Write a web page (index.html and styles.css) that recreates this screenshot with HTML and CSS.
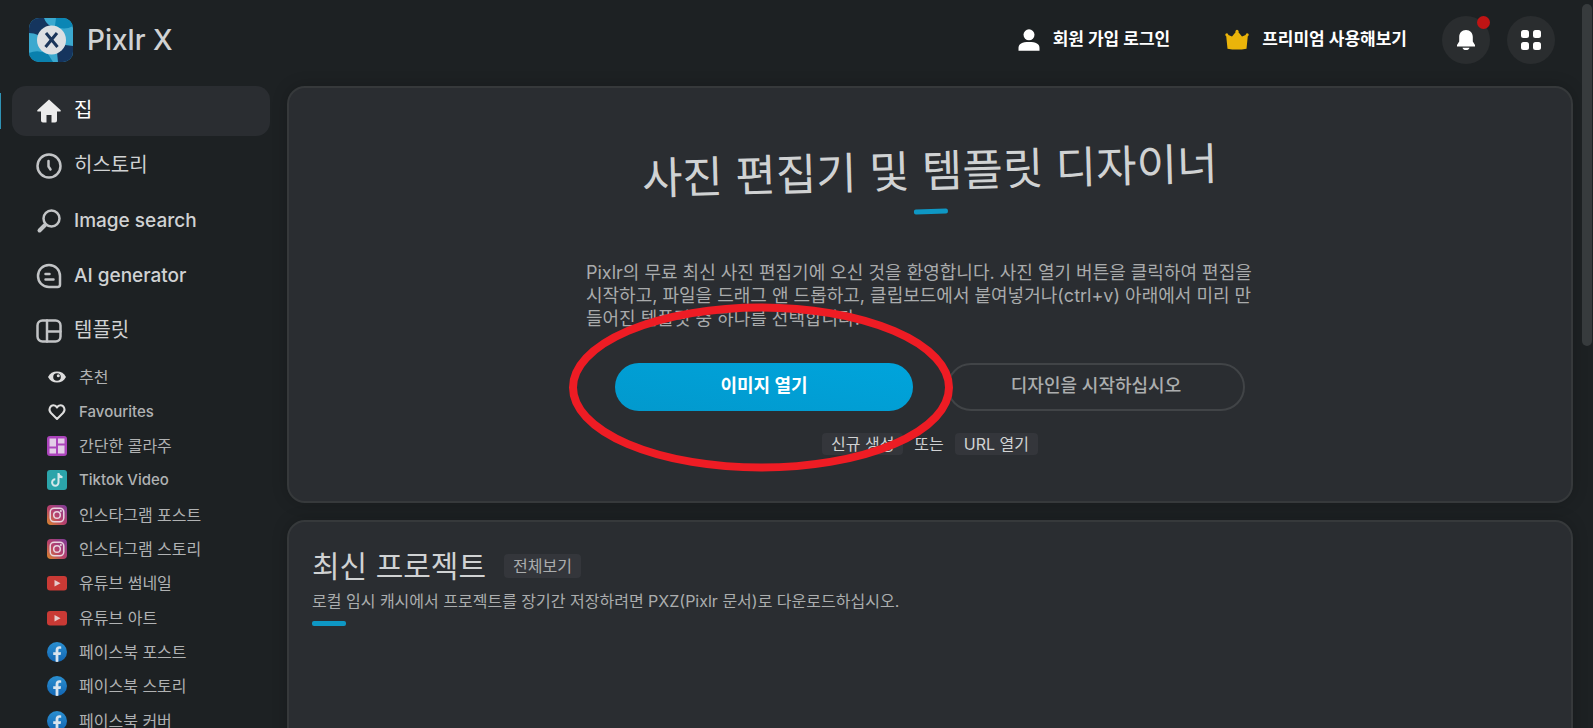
FILE: index.html
```html
<!DOCTYPE html>
<html lang="ko">
<head>
    <meta charset="UTF-8">
    <title>Pixlr X</title>
    <link rel="stylesheet" href="styles.css">
</head>
<body>
<!-- shared icons -->
<svg class="defs" width="0" height="0">
    <defs>
        <linearGradient id="insta" x1="0" y1="1" x2="1" y2="0">
            <stop offset="0" stop-color="#d98a2b"/>
            <stop offset="0.45" stop-color="#b8416a"/>
            <stop offset="1" stop-color="#7d3d9a"/>
        </linearGradient>
        <linearGradient id="fb" x1="0" y1="0" x2="0" y2="1">
            <stop offset="0" stop-color="#2a8fd0"/>
            <stop offset="1" stop-color="#1266b4"/>
        </linearGradient>
        <clipPath id="logoClip"><rect width="44" height="44" rx="10"/></clipPath>
        <clipPath id="fbClip"><circle cx="10" cy="10" r="10"/></clipPath>
    </defs>
    <symbol id="icon-insta" viewBox="0 0 20 20">
        <rect width="20" height="20" rx="4" fill="url(#insta)"/>
        <rect x="3.2" y="3.2" width="13.6" height="13.6" rx="4" fill="none" stroke="#e8d5df" stroke-width="1.5"/>
        <circle cx="10" cy="10" r="3.3" fill="none" stroke="#e8d5df" stroke-width="1.5"/>
        <circle cx="13.9" cy="6.1" r="1" fill="#e8d5df"/>
    </symbol>
    <symbol id="icon-youtube" viewBox="0 0 20 20">
        <rect y="3" width="20" height="14.5" rx="3" fill="#c93a35"/>
        <path d="M7.5 7v6.6l6-3.3z" fill="#e6cccc"/>
    </symbol>
    <symbol id="icon-facebook" viewBox="0 0 20 20">
        <circle cx="10" cy="10" r="10" fill="url(#fb)"/>
        <path clip-path="url(#fbClip)" d="M8.6 20v-7H6.2v-2.8h2.4V8.1c0-2.5 1.5-3.9 3.7-3.9.8 0 1.7.1 1.9.2v2.4h-1.3c-1.2 0-1.5.6-1.5 1.4v2h2.7l-.5 2.8h-2.2v7z" fill="#d9e4ee"/>
    </symbol>
</svg>

<div class="page">
    <div class="content">
        <header class="header">
            <a class="brand" href="#">
                <svg width="44" height="44" viewBox="0 0 44 44">
                    <g clip-path="url(#logoClip)">
                        <rect width="44" height="44" fill="#3ba9cf"/>
                        <path d="M0 0H15Q17 6 23 9L9 17Q5 15 0 15z" fill="#15355e"/>
                        <path d="M27 0H44V8Q35 13 26 8z" fill="#0a86b5"/>
                        <path d="M44 28V44H29L28 34 36 27z" fill="#15355e"/>
                        <path d="M0 35Q9 31 19 36L24 44H0z" fill="#0a80ad"/>
                    </g>
                    <circle cx="22.500" cy="22" r="14.500" fill="#dcdfe2"/>
                    <path d="M17 15l11.500 14M28 15L16.500 29" fill="none" stroke="#1a355a" stroke-width="3"/>
                </svg>
                <span class="brand-name">Pixlr X</span>
            </a>
            <nav class="top-nav">
                <a class="top-link" href="#">
                    <svg width="22" height="22" viewBox="0 0 22 22" fill="#fff">
                        <circle cx="11" cy="5.800" r="5.500"/>
                        <path d="M.5 21.800v-3C.5 15 4 13 11 13s10.500 2 10.500 5.800v3z"/>
                    </svg>
                    <span>회원 가입 로그인</span>
                </a>
                <a class="top-link" href="#">
                    <svg width="24" height="22" viewBox="0 0 24 22" fill="#eab40a">
                        <path d="M1 5l6 2.500L12 1.500l5 6L23 5l-1.500 14.700Q12 21.500 2.500 19.700z"/>
                        <circle cx="1.800" cy="5.700" r="1.500"/><circle cx="12" cy="2.200" r="1.500"/><circle cx="22.200" cy="5.700" r="1.500"/>
                    </svg>
                    <span>프리미엄 사용해보기</span>
                </a>
                <div class="round-buttons">
                    <button class="round" type="button" aria-label="알림">
                        <svg width="20" height="22" viewBox="0 0 20 22" fill="#fff">
                            <path d="M10 1C5.800 1 3.200 4 3.200 8v4.500L1 16v1.500h18V16l-2.200-3.500V8c0-4-2.600-7-6.800-7zM6.500 18.700h7c-.4 1.600-1.600 2.300-3.500 2.300s-3.100-.7-3.500-2.300z"/>
                        </svg>
                        <span class="dot"></span>
                    </button>
                    <button class="round" type="button" aria-label="메뉴">
                        <svg width="20" height="22" viewBox="0 0 20 22" fill="#fff">
                            <rect y="1" width="8" height="8" rx="2.500"/><rect x="12" y="1" width="8" height="8" rx="2.500"/>
                            <rect y="13" width="8" height="8" rx="2.500"/><rect x="12" y="13" width="8" height="8" rx="2.500"/>
                        </svg>
                    </button>
                </div>
            </nav>
        </header>

        <div class="columns">
            <aside class="sidebar">
                <ul class="menu">
                    <li class="menu-item active">
                        <a href="#">
                            <svg width="26" height="26" viewBox="0 0 26 26" fill="#ececec">
                                <path d="M13 1.500L24.500 12Q25.500 13.500 23.500 13.500H21V22.500Q21 24.500 19 24.500H15.500V17H10.500V24.500H7Q5 24.500 5 22.500V13.500H2.500Q.5 13.500 1.500 12z"/>
                            </svg>
                            <span>집</span>
                        </a>
                    </li>
                    <li class="menu-item">
                        <a href="#">
                            <svg class="line" width="26" height="26" viewBox="0 0 26 26">
                                <circle cx="13" cy="13" r="11.500"/>
                                <path d="M12.500 8v5.500l2 3"/>
                            </svg>
                            <span>히스토리</span>
                        </a>
                    </li>
                    <li class="menu-item">
                        <a href="#">
                            <svg class="line" width="26" height="26" viewBox="0 0 26 26">
                                <circle cx="15.500" cy="10.500" r="8"/>
                                <path d="M9 17l-5.500 5.500" stroke-width="4"/>
                            </svg>
                            <span class="latin">Image search</span>
                        </a>
                    </li>
                    <li class="menu-item">
                        <a href="#">
                            <svg class="line" width="26" height="26" viewBox="0 0 26 26">
                                <path d="M13 2C6.500 2 2 7 2 13s4.500 11 11 11h8.500Q24 24 24 21.500V13C24 7 19.500 2 13 2z"/>
                                <path d="M9.500 11h4M9.500 16.500h8"/>
                            </svg>
                            <span class="latin">AI generator</span>
                        </a>
                    </li>
                    <li class="menu-item">
                        <a href="#">
                            <svg class="line" width="26" height="26" viewBox="0 0 26 26">
                                <rect x="1.500" y="2.500" width="23" height="21" rx="5"/>
                                <path d="M11 2.500v21M11 13.500h13.500"/>
                            </svg>
                            <span>템플릿</span>
                        </a>
                    </li>
                </ul>
                <ul class="submenu">
                    <li><a href="#">
                        <svg width="20" height="20" viewBox="0 0 20 20">
                            <path d="M1 10C3 6.300 6 4.500 10 4.500S17 6.300 19 10C17 13.700 14 15.500 10 15.500S3 13.700 1 10z" fill="#dedede"/>
                            <circle cx="10" cy="10" r="3.800" fill="#1d2123"/>
                            <circle cx="11.300" cy="8.800" r="1.500" fill="#dedede"/>
                        </svg>
                        추천</a></li>
                    <li><a class="latin-small" href="#">
                        <svg width="20" height="20" viewBox="0 0 20 20">
                            <path d="M10 17L4 11C.6 7.500 3.500 3.200 6.500 3.200c1.600 0 2.800.8 3.500 2.300.7-1.500 1.900-2.300 3.500-2.300 3 0 5.900 4.300 2.500 7.800z" fill="none" stroke="#dedede" stroke-width="2" stroke-linejoin="round"/>
                        </svg>
                        Favourites</a></li>
                    <li><a href="#">
                        <svg width="20" height="20" viewBox="0 0 20 20">
                            <rect width="20" height="20" rx="3" fill="#ab44bb"/>
                            <path d="M2.500 2.500h6.500v8H2.500zM11 2.500h6.500v5H11zM2.500 12.500h6.500v5H2.500zM11 9.500h6.500v8H11z" fill="#e3cde7"/>
                        </svg>
                        간단한 콜라주</a></li>
                    <li><a class="latin-small" href="#">
                        <svg width="20" height="20" viewBox="0 0 20 20">
                            <rect width="20" height="20" rx="3" fill="#2ba4aa"/>
                            <path d="M11.500 3v9.500a3.200 3.200 0 1 1-3.200-3.200M11.500 3.500c.3 2.300 1.700 3.500 4 3.700" fill="none" stroke="#d5e8ea" stroke-width="2"/>
                        </svg>
                        Tiktok Video</a></li>
                    <li><a href="#"><svg width="20" height="20"><use href="#icon-insta"/></svg>인스타그램 포스트</a></li>
                    <li><a href="#"><svg width="20" height="20"><use href="#icon-insta"/></svg>인스타그램 스토리</a></li>
                    <li><a href="#"><svg width="20" height="20"><use href="#icon-youtube"/></svg>유튜브 썸네일</a></li>
                    <li><a href="#"><svg width="20" height="20"><use href="#icon-youtube"/></svg>유튜브 아트</a></li>
                    <li><a href="#"><svg width="20" height="20"><use href="#icon-facebook"/></svg>페이스북 포스트</a></li>
                    <li><a href="#"><svg width="20" height="20"><use href="#icon-facebook"/></svg>페이스북 스토리</a></li>
                    <li><a href="#"><svg width="20" height="20"><use href="#icon-facebook"/></svg>페이스북 커버</a></li>
                </ul>
            </aside>

            <main class="main">
                <section class="card hero">
                    <h1 class="hero-title">사진 편집기 및 템플릿 디자이너</h1>
                    <p class="hero-text">Pixlr의 무료 최신 사진 편집기에 오신 것을 환영합니다. 사진 열기 버튼을 클릭하여 편집을 시작하고, 파일을 드래그 앤 드롭하고, 클립보드에서 붙여넣거나(ctrl+v) 아래에서 미리 만들어진 템플릿 중 하나를 선택합니다.</p>
                    <div class="actions">
                        <button class="btn primary" type="button">이미지 열기</button>
                        <button class="btn outline" type="button">디자인을 시작하십시오</button>
                        <svg class="highlight" width="384" height="169" viewBox="0 0 384 169">
                            <ellipse cx="192" cy="84.500" rx="188" ry="80" fill="none" stroke="#ee1c24" stroke-width="8"/>
                        </svg>
                    </div>
                    <div class="alt">
                        <button class="chip" type="button">신규 생성</button>
                        <span>또는</span>
                        <button class="chip" type="button">URL 열기</button>
                    </div>
                </section>

                <section class="card projects">
                    <div class="projects-head">
                        <h2>최신 프로젝트</h2>
                        <button class="chip view-all" type="button">전체보기</button>
                    </div>
                    <p>로컬 임시 캐시에서 프로젝트를 장기간 저장하려면 PXZ(Pixlr 문서)로 다운로드하십시오.</p>
                </section>
            </main>
        </div>
    </div>
    <div class="scrollbar"><div class="thumb"></div></div>
</div>
</body>
</html>
```

FILE: styles.css
```css
* {
    box-sizing: border-box;
    margin: 0;
    padding: 0;
}

body {
    background: #1d2123;
    color: #d0d2d3;
    font-family: Inter, "Noto Sans CJK KR", sans-serif;
    font-size: 16px;
    overflow: hidden;
}

a {
    color: inherit;
    text-decoration: none;
}

ul {
    list-style: none;
}

button {
    border: 0;
    color: inherit;
    font-family: inherit;
    cursor: pointer;
}

svg {
    display: block;
    flex-shrink: 0;
}

.defs {
    position: absolute;
}

.page {
    display: flex;
    height: 100vh;
    overflow: hidden;
}

.content {
    flex: 1;
    min-width: 0;
    display: flex;
    flex-direction: column;
}

.scrollbar {
    width: 12px;
    padding: 4px 1px;
}

.thumb {
    height: 342px;
    border-radius: 5px;
    background: #373b3d;
}

/* header */
.header {
    display: flex;
    flex-shrink: 0;
    justify-content: space-between;
    align-items: center;
    height: 86px;
    padding: 0 26px 6px 29px;
}

.brand {
    display: flex;
    align-items: center;
    gap: 14px;
}

.brand-name {
    font-size: 28px;
    font-weight: 500;
    line-height: 40px;
}

.top-nav {
    display: flex;
    align-items: center;
    gap: 55px;
    color: #fff;
}

.top-link {
    display: flex;
    align-items: center;
    gap: 13px;
    font-size: 17px;
    font-weight: 700;
    line-height: 24px;
}

.top-link span {
    padding-bottom: 2px;
}

.round-buttons {
    display: flex;
    gap: 17px;
    margin-left: -20px;
}

.round {
    position: relative;
    display: flex;
    align-items: center;
    justify-content: center;
    width: 48px;
    height: 48px;
    border-radius: 50%;
    background: #2a2d2f;
}

.dot {
    position: absolute;
    top: 0;
    right: 0;
    width: 13px;
    height: 13px;
    border-radius: 50%;
    background: #c01414;
}

.columns {
    flex: 1;
    min-height: 0;
    display: flex;
}

/* sidebar */
.sidebar {
    width: 287px;
    flex-shrink: 0;
}

.menu {
    display: grid;
    gap: 5px;
}

.menu-item {
    padding: 0 17px 0 12px;
    font-size: 20px;
}

.menu-item a {
    display: flex;
    align-items: center;
    gap: 12px;
    height: 50px;
    padding-left: 24px;
    border-radius: 14px;
}

.menu-item span {
    line-height: 28px;
    padding-bottom: 2px;
}

.menu-item .latin {
    font-size: 19px;
    font-weight: 500;
    padding-bottom: 0;
}

.menu-item.active {
    color: #fff;
    background: linear-gradient(#2f93b5, #2f93b5) no-repeat left center / 1px 36px;
}

.active a {
    background: #2a2d31;
}

.line {
    fill: none;
    stroke: #c2c4c6;
    stroke-width: 2.5;
    stroke-linecap: round;
    stroke-linejoin: round;
}

.submenu {
    display: grid;
    grid-auto-rows: 1fr;
    height: 378px;
    margin-top: 4px;
    padding-left: 47px;
    color: #b0b2b3;
}

.submenu a {
    display: flex;
    align-items: center;
    gap: 12px;
    height: 100%;
    line-height: 24px;
}

.submenu .latin-small {
    font-size: 15px;
    font-weight: 500;
}

/* cards */
.main {
    flex: 1;
    min-width: 0;
    display: flex;
    flex-direction: column;
    gap: 17px;
    padding-right: 8px;
}

.card {
    flex-shrink: 0;
    border: 2px solid #36393b;
    border-radius: 18px;
    background: #2a2d31;
    box-shadow: 0 0 16px rgba(0, 0, 0, 0.2);
}

.hero {
    display: flex;
    flex-direction: column;
    align-items: center;
    padding: 50px 24px 46px;
}

.hero-title {
    font-size: 44px;
    font-weight: 400;
    line-height: 66px;
    transform: rotate(-1.5deg);
}

.hero-title::after,
.projects::after {
    content: "";
    display: block;
    width: 34px;
    height: 5px;
    border-radius: 2px;
    background: #0e97c4;
}

.hero-title::after {
    margin: 5px auto 0;
}

.hero-text {
    max-width: 688px;
    margin-top: 47px;
    padding-right: 12px;
    color: #a9abac;
    font-size: 18px;
    line-height: 23px;
}

.actions {
    position: relative;
    display: flex;
    gap: 34px;
    margin-top: 33px;
}

.btn {
    width: 298px;
    height: 48px;
    border-radius: 24px;
    font-size: 18px;
    line-height: 24px;
    padding-bottom: 2px;
}

.primary {
    background: linear-gradient(10deg, #0299cd, #00a4dc);
    color: #fff;
    font-weight: 700;
}

.outline {
    border: 2px solid #414447;
    background: transparent;
    color: #abadae;
    font-weight: 500;
}

/* red ring round the open button */
.highlight {
    position: absolute;
    left: -46px;
    top: -60px;
    pointer-events: none;
}

.alt {
    display: flex;
    align-items: center;
    gap: 11px;
    margin-top: 22px;
    line-height: 22px;
}

.chip {
    padding: 0 9px;
    border-radius: 4px;
    background: #34363b;
    font-size: 16px;
    line-height: 22px;
}

/* runs on below the fold */
.projects {
    min-height: 400px;
    padding: 22px 23px;
}

.projects-head {
    display: flex;
    align-items: center;
    gap: 18px;
}

.projects h2 {
    font-size: 30px;
    font-weight: 400;
    line-height: 44px;
}

.projects p {
    margin: 1px 0 8px;
    color: #abadae;
    line-height: 24px;
}

.view-all {
    color: #abadae;
    line-height: 24px;
}
```
